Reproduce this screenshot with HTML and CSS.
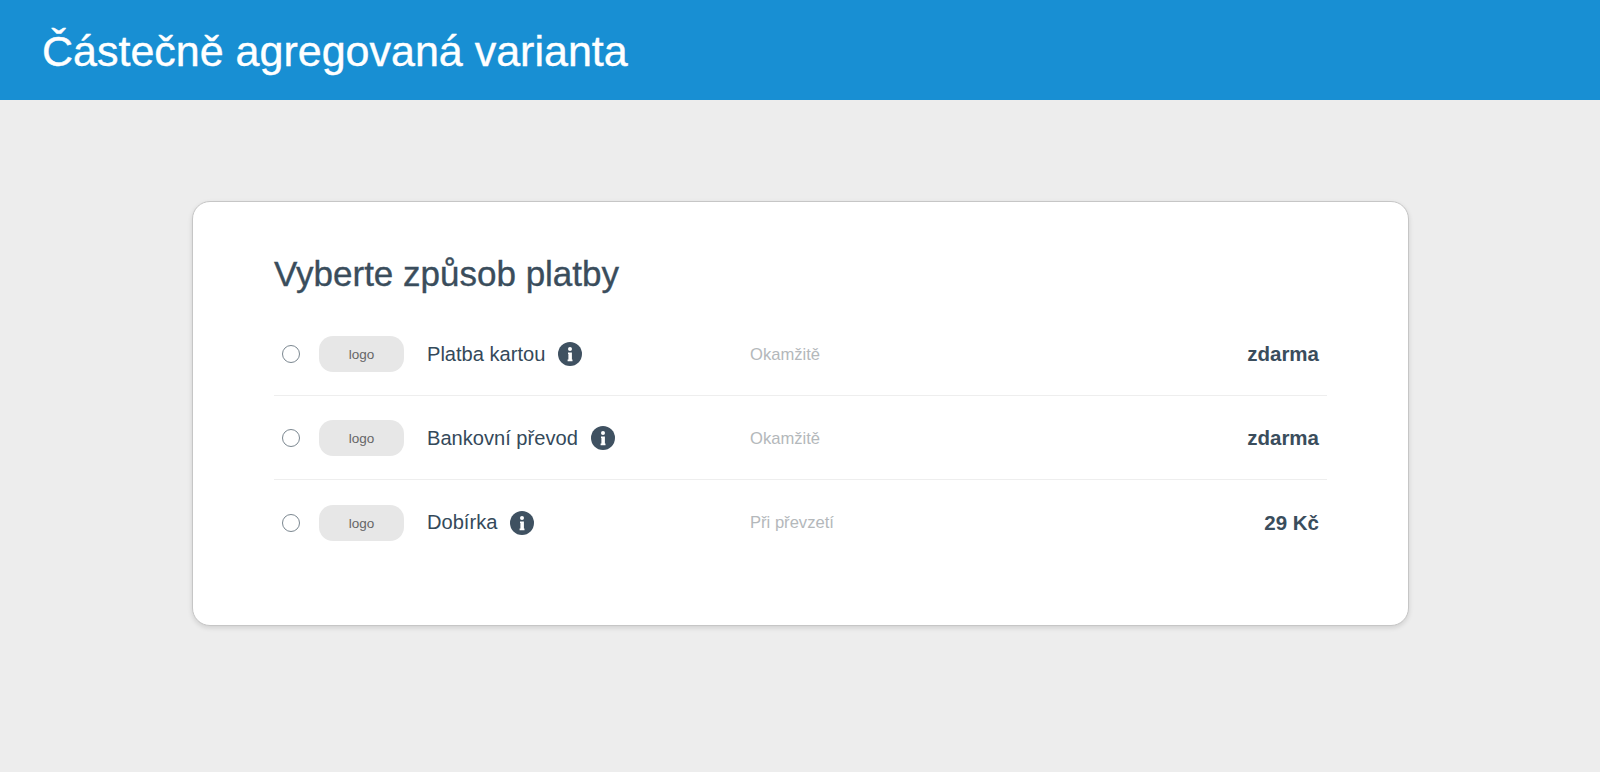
FILE: index.html
```html
<!DOCTYPE html>
<html lang="cs">
<head>
<meta charset="utf-8">
<title>Částečně agregovaná varianta</title>
<link rel="stylesheet" href="styles.css">
</head>
<body>
<header class="topbar"><h1 class="topbar-title">Částečně agregovaná varianta</h1></header>
<main class="content">
  <section class="card">
    <h2 class="card-title">Vyberte způsob platby</h2>
    <ul class="methods">
      <li class="method">
        <span class="radio"></span>
        <span class="logo">logo</span>
        <span class="name-cell"><span class="name">Platba kartou</span>
          <svg class="info" viewBox="0 0 24 24"><circle cx="12" cy="12" r="12"/><circle class="info-mark" cx="12" cy="6.9" r="2"/><path class="info-mark" d="M10 10.4h3.9v7.2h0.6v1.6H9.6v-1.6h0.8v-5.6H10z"/></svg></span>
        <span class="time">Okamžitě</span>
        <span class="price">zdarma</span>
      </li>
      <li class="method">
        <span class="radio"></span>
        <span class="logo">logo</span>
        <span class="name-cell"><span class="name">Bankovní převod</span>
          <svg class="info" viewBox="0 0 24 24"><circle cx="12" cy="12" r="12"/><circle class="info-mark" cx="12" cy="6.9" r="2"/><path class="info-mark" d="M10 10.4h3.9v7.2h0.6v1.6H9.6v-1.6h0.8v-5.6H10z"/></svg></span>
        <span class="time">Okamžitě</span>
        <span class="price">zdarma</span>
      </li>
      <li class="method">
        <span class="radio"></span>
        <span class="logo">logo</span>
        <span class="name-cell"><span class="name">Dobírka</span>
          <svg class="info" viewBox="0 0 24 24"><circle cx="12" cy="12" r="12"/><circle class="info-mark" cx="12" cy="6.9" r="2"/><path class="info-mark" d="M10 10.4h3.9v7.2h0.6v1.6H9.6v-1.6h0.8v-5.6H10z"/></svg></span>
        <span class="time">Při převzetí</span>
        <span class="price">29 Kč</span>
      </li>
    </ul>
  </section>
</main>
</body>
</html>
```

FILE: styles.css
```css
* { box-sizing: border-box; }
html, body { margin: 0; height: 100%; }
body {
  background: #ededed;
  font-family: "Liberation Sans", Arial, sans-serif;
  color: #34495a;
}
.topbar {
  height: 100px;
  background: #188fd3;
  display: flex;
  align-items: center;
  padding: 2px 0 0 42px;
}
.topbar-title {
  margin: 0;
  font-size: 43px;
  font-weight: 400;
  color: #fff;
  -webkit-text-stroke: 0.4px #fff;
}
.content { padding: 101px 0 0 192px; display: flex; }
.card {
  width: 1217px;
  height: 425px;
  background: #fff;
  border: 1px solid #c6c6c6;
  border-radius: 18px;
  box-shadow: 0 2px 5px rgba(0,0,0,.12);
  padding: 53px 81px 0;
}
.card-title {
  margin: 0 0 19px;
  font-size: 35px;
  line-height: 38px;
  font-weight: 400;
  color: #3a4d5c;
  -webkit-text-stroke: 0.35px #3a4d5c;
}
.methods { list-style: none; margin: 0; padding: 0; }
.method {
  height: 84px;
  display: flex;
  align-items: center;
  padding: 1px 8px 0;
  border-bottom: 1px solid #eeeeee;
}
.method:last-child { border-bottom: 0; }
.radio {
  width: 18px;
  height: 18px;
  border-radius: 50%;
  border: 1px solid #7b8790;
  background: #fff;
  flex: none;
  margin-right: 19px;
}
.logo {
  width: 85px;
  height: 36px;
  border-radius: 14px;
  background: #e7e7e7;
  color: #666;
  font-size: 13.5px;
  padding-top: 1px;
  display: flex;
  align-items: center;
  justify-content: center;
  flex: none;
  margin-right: 23px;
}
.name-cell {
  width: 323px;
  flex: none;
  display: flex;
  align-items: center;
  gap: 13px;
}
.name { font-size: 20.1px; color: #34495a; }
.info { width: 24px; height: 24px; flex: none; fill: #3f5161; }
.info .info-mark { fill: #fff; }
.time { font-size: 16.6px; color: #b4b8bb; flex: 1; padding-top: 1px; }
.price { font-size: 20.5px; font-weight: 700; color: #3a4d5c; }
```
